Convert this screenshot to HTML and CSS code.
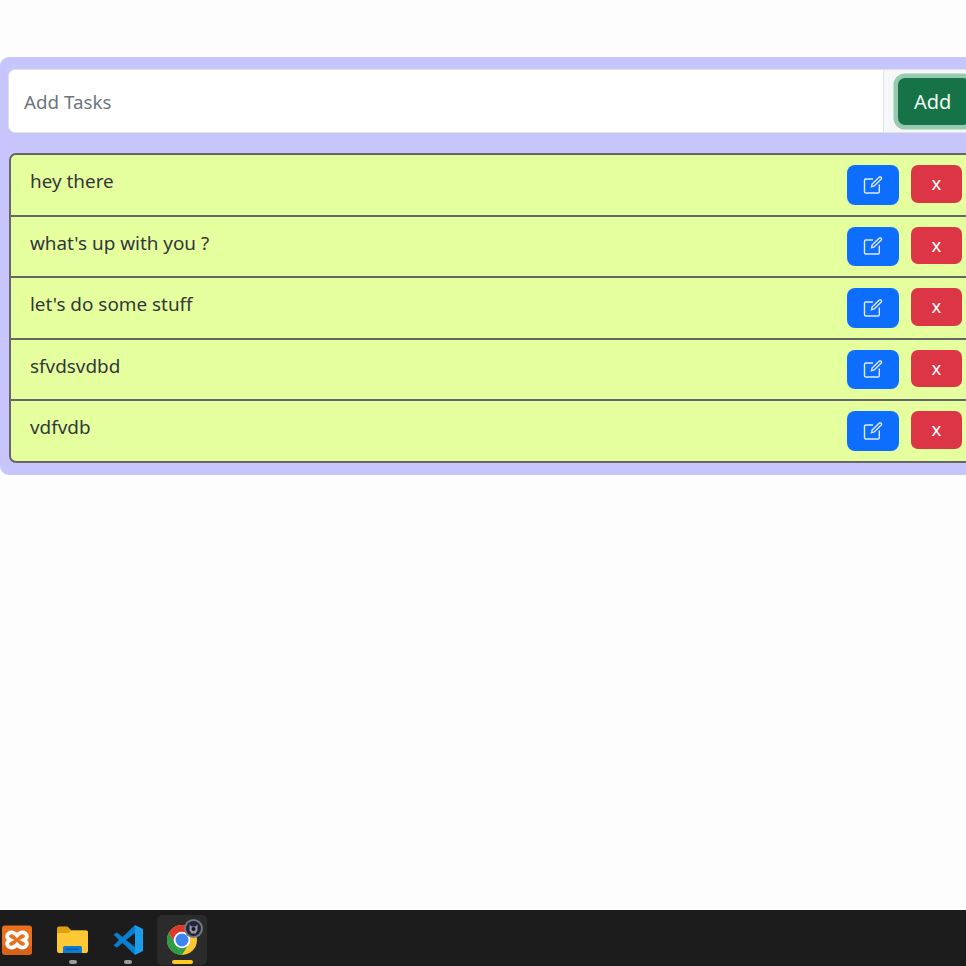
FILE: index.html
```html
<!DOCTYPE html>
<html lang="en">
<head>
<meta charset="utf-8">
<title>Tasks</title>
<link rel="stylesheet" href="styles.css">
</head>
<body>
<main class="page">
  <section class="panel">
    <form class="input-group">
      <input class="task-input" type="text" placeholder="Add Tasks">
      <div class="addon"><button class="btn-add" type="button">Add</button></div>
    </form>
    <ul class="list">
      <li class="row"><span class="label">hey there</span><div class="actions"><button class="btn-edit" type="button"><svg class="pen" viewBox="0 0 20 20"><path d="M10 4H2.800A1.300 1.300 0 0 0 1.500 5.300V16.700A1.300 1.300 0 0 0 2.800 18H15A1.300 1.300 0 0 0 16.300 16.700V9.500"/><path d="M8.500 11.800l.6-2.700L16.400 2a1 1 0 0 1 1.400 0l.5.500a1 1 0 0 1 0 1.400L11.200 11z"/></svg></button><button class="btn-del" type="button">x</button></div></li>
      <li class="row"><span class="label">what's up with you ?</span><div class="actions"><button class="btn-edit" type="button"><svg class="pen" viewBox="0 0 20 20"><path d="M10 4H2.800A1.300 1.300 0 0 0 1.500 5.300V16.700A1.300 1.300 0 0 0 2.800 18H15A1.300 1.300 0 0 0 16.300 16.700V9.500"/><path d="M8.500 11.800l.6-2.700L16.400 2a1 1 0 0 1 1.400 0l.5.500a1 1 0 0 1 0 1.400L11.200 11z"/></svg></button><button class="btn-del" type="button">x</button></div></li>
      <li class="row"><span class="label">let's do some stuff</span><div class="actions"><button class="btn-edit" type="button"><svg class="pen" viewBox="0 0 20 20"><path d="M10 4H2.800A1.300 1.300 0 0 0 1.500 5.300V16.700A1.300 1.300 0 0 0 2.800 18H15A1.300 1.300 0 0 0 16.300 16.700V9.500"/><path d="M8.500 11.800l.6-2.700L16.400 2a1 1 0 0 1 1.400 0l.5.500a1 1 0 0 1 0 1.400L11.200 11z"/></svg></button><button class="btn-del" type="button">x</button></div></li>
      <li class="row"><span class="label">sfvdsvdbd</span><div class="actions"><button class="btn-edit" type="button"><svg class="pen" viewBox="0 0 20 20"><path d="M10 4H2.800A1.300 1.300 0 0 0 1.500 5.300V16.700A1.300 1.300 0 0 0 2.800 18H15A1.300 1.300 0 0 0 16.300 16.700V9.500"/><path d="M8.500 11.800l.6-2.700L16.400 2a1 1 0 0 1 1.400 0l.5.500a1 1 0 0 1 0 1.400L11.200 11z"/></svg></button><button class="btn-del" type="button">x</button></div></li>
      <li class="row"><span class="label">vdfvdb</span><div class="actions"><button class="btn-edit" type="button"><svg class="pen" viewBox="0 0 20 20"><path d="M10 4H2.800A1.300 1.300 0 0 0 1.500 5.300V16.700A1.300 1.300 0 0 0 2.800 18H15A1.300 1.300 0 0 0 16.300 16.700V9.500"/><path d="M8.500 11.800l.6-2.700L16.400 2a1 1 0 0 1 1.400 0l.5.500a1 1 0 0 1 0 1.400L11.200 11z"/></svg></button><button class="btn-del" type="button">x</button></div></li>
    </ul>
  </section>
</main>
<footer class="taskbar">
  <div class="tb-item tb-xampp">
    <svg class="tb-icon-x" viewBox="0 0 32 32"><rect width="30" height="29" x="1" y="1.500" rx="3" fill="#e8701f"/><rect width="30" height="10" x="1" y="21" rx="3" fill="#d9621a"/><path transform="translate(16 16) scale(.76) translate(-16 -16)" d="M9 6c3 0 5 2 7 4 2-2 4-4 7-4 3 0 6 2 6 5 0 2.500-2 4-4 5 2 1 4 2.500 4 5 0 3-3 5-6 5-3 0-5-2-7-4-2 2-4 4-7 4-3 0-6-2-6-5 0-2.500 2-4 4-5-2-1-4-2.500-4-5 0-3 3-5 6-5z" fill="none" stroke="#fff" stroke-width="5"/></svg>
  </div>
  <div class="tb-item tb-files">
    <svg class="tb-icon-f" viewBox="0 0 31 27"><path d="M0 2.500A2 2 0 0 1 2 .5h8.500l4 4H29a2 2 0 0 1 2 2V12H0z" fill="#dfa10e"/><path d="M0 7h11.500l3-2.500H29a2 2 0 0 1 2 2V25a2 2 0 0 1-2 2H2a2 2 0 0 1-2-2z" fill="#fcc935"/><path d="M6 27v-5.500A1.500 1.500 0 0 1 7.500 20h16a1.500 1.500 0 0 1 1.500 1.500V27z" fill="#0f7bd0"/><rect x="9" y="22.500" width="13" height="1.500" fill="#0a5fa6"/></svg>
    <span class="pip"></span>
  </div>
  <div class="tb-item tb-code">
    <svg class="tb-icon-c" viewBox="0 0 32 32"><path d="M23 1 10.500 13 5 8.500 1.500 10.500 7 16 1.500 21.500 5 23.500 10.500 19 23 31V1z" fill="#0a7fd0"/><path d="M23 1l8 4v22l-8 4z" fill="#1a9ce8"/><path d="M23 9l-9 7 9 7z" fill="#1c1c1c"/></svg>
    <span class="pip"></span>
  </div>
  <div class="tb-item tb-chrome">
    <svg class="tb-icon-g" viewBox="0 0 40 40"><circle cx="15" cy="24" r="15" fill="#fbc82f"/><path d="M2 16.500 8.500 28 15 39A15 15 0 0 1 2 16.500z" fill="#2c9c47"/><path d="M8.500 28 15 39 21.500 28z" fill="#2c9c47"/><path d="M28 16.500H15L8.500 28 2 16.500A15 15 0 0 1 28 16.500z" fill="#e0362c"/><circle cx="15" cy="24" r="8.300" fill="#fff"/><circle cx="15" cy="24" r="6.500" fill="#3d84ee"/><circle cx="26.500" cy="12.500" r="9.500" fill="#74777f"/><circle cx="26.500" cy="12.500" r="7.500" fill="#23263a"/><path d="M22.500 8.500l2 2h4l2-2v6l-2 3h-4l-2-3z" fill="#9396a8"/><circle cx="26.500" cy="13" r="2" fill="#15151c"/></svg>
    <span class="pip-active"></span>
  </div>
</footer>
</body>
</html>
```
FILE: styles.css
```css
* { box-sizing: border-box; }
html, body { margin: 0; height: 100%; }
body {
  background: #fdfdfd;
  overflow: hidden;
  font-family: "Noto Sans", "Open Sans", sans-serif;
  display: flex;
  flex-direction: column;
  color: #33373a;
}
.page { flex: 1; padding-top: 57px; min-height: 0; }
.panel {
  width: 1000px;
  background: #c6c6fd;
  border-radius: 9px;
  padding: 12px 9px 12px 8px;
}
.input-group {
  display: flex;
  height: 64px;
  margin-bottom: 20px;
  background: #fff;
  border: 1px solid #dee2e6;
  border-radius: 7px;
}
.task-input {
  flex: 1;
  min-width: 0;
  border: 0;
  outline: 0;
  background: transparent;
  padding: 2px 15px 0;
  font: 18.800px "Noto Sans", sans-serif;
  border-radius: 7px;
}
.task-input::placeholder { color: #6c757d; }
.addon {
  width: 107px;
  flex: none;
  background: #f6f7f9;
  border-left: 1px solid #e3e5e9;
  display: flex;
  align-items: center;
  padding-left: 14px;
}
.btn-add {
  width: 72px;
  height: 47px;
  border: 0;
  color: #f4f8f6;
  background: #157347;
  border-radius: 7px;
  box-shadow: 0 0 0 4.500px #98c9b3;
  font: 20px "Noto Sans", sans-serif;
  text-align: left;
  padding: 0 0 0 16px;
}
.list {
  list-style: none;
  margin: 0 0 0 1px;
  padding: 0;
  border: 2px solid #666;
  border-radius: 7px;
  background: #e5ff9e;
}
.row {
  height: 61.500px;
  display: flex;
  justify-content: space-between;
  align-items: flex-start;
  padding: 10px 0 0 19px;
  border-bottom: 2px solid #666;
}
.row:last-child { border-bottom: 0; height: 60px; }
.label { font-size: 18.900px; line-height: 32px; }
.actions {
  display: flex;
  gap: 12px;
  margin-right: 27px;
}
.btn-edit, .btn-del {
  border: 0;
  color: #fff;
  display: flex;
  align-items: center;
  justify-content: center;
  padding: 0;
}
.btn-edit {
  width: 52px;
  height: 39.500px;
  background: #0d6efd;
  border-radius: 8px;
}
.btn-del {
  width: 51px;
  height: 37.500px;
  background: #dc3545;
  border-radius: 7px;
  font: 400 18.500px "Noto Sans", sans-serif;
  padding-bottom: 2px;
}
.pen {
  width: 20px;
  height: 20px;
  fill: none;
  stroke: #dfeaff;
  stroke-width: 1.400;
}
.taskbar {
  height: 56px;
  flex: none;
  background: #1c1c1c;
  display: flex;
  align-items: flex-start;
  position: relative;
}
.tb-item { position: relative; height: 56px; flex: none; display: flex; justify-content: center; }
.tb-xampp { width: 34px; padding-top: 14px; }
.tb-files { width: 55px; margin-left: 11px; padding-top: 16px; }
.tb-code { width: 55px; padding-top: 14px; }
.tb-chrome {
  width: 50px;
  height: 50px;
  margin: 5px 0 0 2px;
  background: #2b2b2b;
  border-radius: 5px;
  padding-top: 1px;
}
.tb-icon-x { width: 32px; height: 32px; }
.tb-icon-f { width: 31px; height: 27px; }
.tb-icon-c { width: 32px; height: 32px; }
.tb-icon-g { width: 40px; height: 40px; margin-left: 10px; }
.pip {
  position: absolute;
  bottom: 2px;
  left: 50%;
  width: 8px;
  height: 4px;
  margin-left: -4px;
  border-radius: 2px;
  background: #9a9a9a;
}
.pip-active {
  position: absolute;
  top: 45px;
  left: 15px;
  width: 21px;
  height: 4px;
  border-radius: 2px;
  background: #ffc928;
}
```
